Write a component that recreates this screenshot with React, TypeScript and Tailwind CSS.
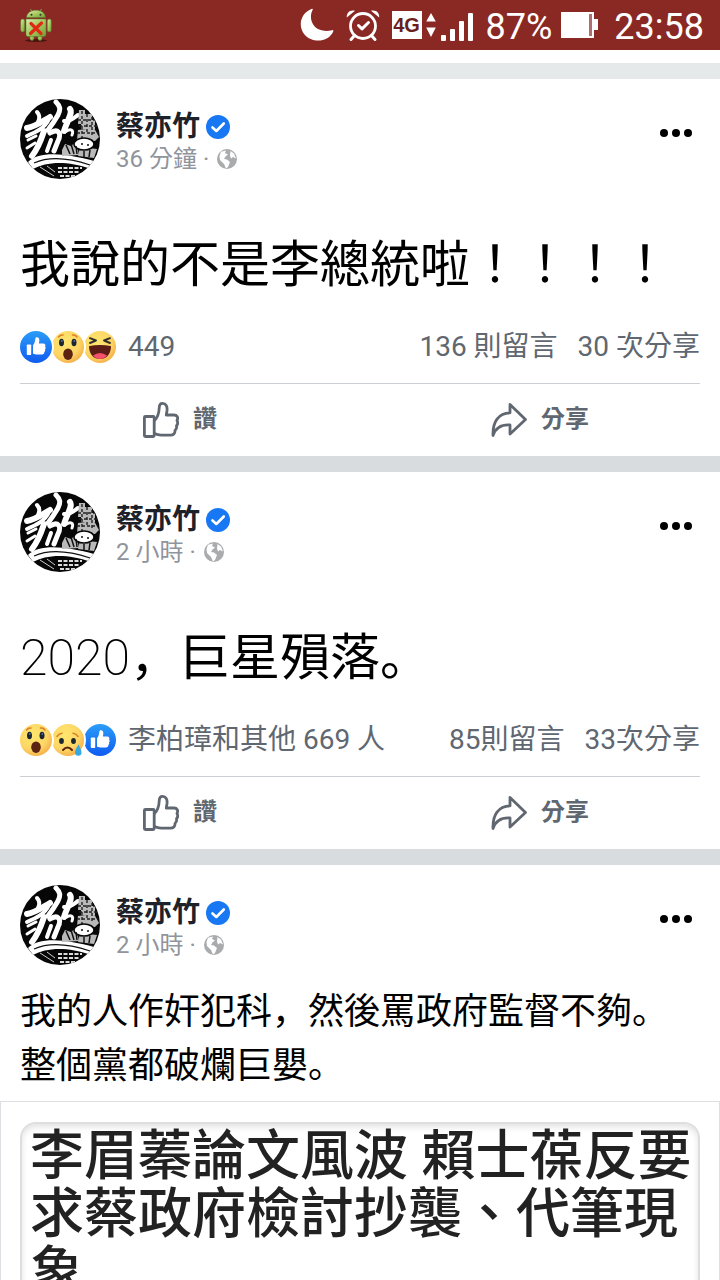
import React from 'react';

type ReactionKind = 'like' | 'wow' | 'haha' | 'sad';

interface Post {
  id: number;
  time: string;
  text: string;
  large?: boolean;
  reactions?: ReactionKind[];
  summary?: string;
  comments?: string;
  shares?: string;
  headline?: string;
}

const posts: Post[] = [
  {
    id: 1,
    time: '36 分鐘',
    text: '我說的不是李總統啦！！！！',
    large: true,
    reactions: ['like', 'wow', 'haha'],
    summary: '449',
    comments: '136 則留言',
    shares: '30 次分享',
  },
  {
    id: 2,
    time: '2 小時',
    text: '2020，巨星殞落。',
    large: true,
    reactions: ['wow', 'sad', 'like'],
    summary: '李柏璋和其他 669 人',
    comments: '85則留言',
    shares: '33次分享',
  },
  {
    id: 3,
    time: '2 小時',
    text: '我的人作奸犯科，然後罵政府監督不夠。整個黨都破爛巨嬰。',
    headline: '李眉蓁論文風波 賴士葆反要求蔡政府檢討抄襲、代筆現象',
  },
];

const AndroidIcon = () => (
  <svg viewBox="0 0 32 34" className="w-8 h-[34px]">
    <defs>
      <linearGradient id="droid" x1="0" x2="1" y1="0" y2="1">
        <stop offset="0" stopColor="#dcebb0" />
        <stop offset="0.5" stopColor="#a3ca5e" />
        <stop offset="1" stopColor="#6f9f36" />
      </linearGradient>
    </defs>
    <ellipse cx="16" cy="32.5" rx="11" ry="1.5" fill="#4a1210" />
    <path d="M10.5 1 12 3.5M21.5 1 20 3.5" stroke="#8da060" strokeWidth="1" />
    <g fill="url(#droid)" stroke="#587a30" strokeWidth=".5">
      <rect x="10" y="26" width="4" height="6.5" rx="2" />
      <rect x="18" y="26" width="4" height="6.5" rx="2" />
      <rect x="0.7" y="11" width="4" height="13" rx="2" />
      <rect x="27.3" y="11" width="4" height="13" rx="2" />
      <path d="M6.5 9.5C7 4.5 11 2.3 16 2.3s9 2.2 9.5 7.2z" />
      <path d="M6 11h20v15.5a2 2 0 0 1-2 2H8a2 2 0 0 1-2-2z" />
    </g>
    <circle cx="11.5" cy="6.8" r="1" fill="#333" />
    <circle cx="20.5" cy="6.8" r="1" fill="#333" />
    <path d="M11 15.5 21 25.5M21.5 15 10.5 25.5" stroke="#e02b14" strokeWidth="3.2" strokeLinecap="round" />
  </svg>
);

const StatusBar = () => (
  <header className="flex items-center h-[50px] shrink-0 px-5 bg-[#8a2824] text-white">
    <AndroidIcon />
    <div className="flex items-center ml-auto -mr-1">
      <svg viewBox="0 0 34 34" className="w-[34px] h-[34px] mr-3">
        <path d="M12 .8C.5 5-2.5 18 4.500 26.500c8 9.500 24.500 7.500 28.800-3.300.3-.9-.3-1.400-1.200-1C25 24 17.500 22.500 13.500 17 10.500 12.500 10 7 12.700 1.800c.3-.7-.1-1.200-.7-1z" fill="#fff" />
      </svg>
      <svg viewBox="0 0 34 34" className="w-[34px] h-[34px] mr-3" fill="none" stroke="#fff" strokeLinecap="round" strokeLinejoin="round">
        <circle cx="17" cy="18" r="12.5" strokeWidth="2.8" />
        <path d="M8.5 27.5 5 31.5M25.5 27.5 29 31.5" strokeWidth="3" />
        <path d="M12.500 17.500 16 20.800 22.500 14.500" strokeWidth="3" />
        <path d="M.8 9.5C.5 4.500 4 1.500 9 2.800zM33.200 9.500C33.500 4.500 30 1.500 25 2.800z" fill="#fff" stroke="none" />
      </svg>
      <span className="flex items-center justify-center w-[30px] h-7 bg-white text-[#6b1f1c] font-bold text-[20px] leading-7 font-['Liberation_Sans']">4G</span>
      <svg viewBox="0 0 10 26" className="w-[10px] h-[26px] mx-1" fill="#fff">
        <path d="M5 1 9.8 9.5H.2zM5 25 .2 15.5h9.6z" />
      </svg>
      <svg viewBox="0 0 34 30" className="w-[34px] h-[30px] mt-1 mr-3" fill="#fff">
        <rect x="1" y="23" width="5" height="6" rx="1" />
        <rect x="10" y="17" width="5" height="12" rx="1" />
        <rect x="19" y="9" width="5" height="20" rx="1" />
        <rect x="28" y="1" width="5" height="28" rx="1" />
      </svg>
      <span className="pt-1 text-[36px] leading-[46px] mr-2">87%</span>
      <svg viewBox="0 0 40 28" className="w-10 h-7 mr-3.5">
        <path d="M1 1h33v7h4v11h-4v8H1z" fill="#fff" />
        <path d="M29 3h3v22h-3z" fill="#b06f6c" />
      </svg>
      <span className="pt-1 text-[36px] leading-[46px]">23:58</span>
    </div>
  </header>
);

const Avatar = () => (
  <svg viewBox="0 0 80 80" className="w-20 h-20 rounded-full shrink-0">
    <rect width="80" height="80" fill="#070707" />
    {/* brush strokes */}
    <g stroke="#fff" fill="none" strokeLinecap="round" strokeLinejoin="round">
      <path d="M17 13C20 16 20 19 18 23" strokeWidth="4" />
      <path d="M7 29C15 28 23 22 30 18" strokeWidth="6" />
      <path d="M29 20C25 29 16 33 7 37" strokeWidth="4" />
      <path d="M36 3C40 7 41 10 38 16 34 23 31 27 28 31" strokeWidth="5" />
      <path d="M24 32C21 41 19 48 12 57" strokeWidth="6" />
      <path d="M8 41 16 37M7 49 15 44" strokeWidth="3" />
      <path d="M30 34C38 29 42 34 38 42L34 52" strokeWidth="5" />
      <path d="M31 41 27 52" strokeWidth="4" />
      <path d="M50 10C53 14 47 22 44 32" strokeWidth="6" />
      <path d="M44 22C50 23 55 18 58 16" strokeWidth="4" />
      <path d="M45 33C51 29 54 31 52 36" strokeWidth="3" />
    </g>
    <path d="M8 63C20 51 48 55 74 62l-3 8C46 61 26 63 13 70z" fill="#fff" />
    <path d="M14 64C32 56 52 60 70 66" stroke="#111" strokeWidth="1.2" fill="none" />
    {/* helmeted figure */}
    <g fill="#b9b9b9">
      <path d="M59 11h6v4h7v6h3v9H61v-5h-3z" />
      <path d="M58 31l16-2 5 9-4 4-18-1z" />
      <path d="M42 51l3-6 6 2 5-4 3 13-17 1z" />
      <path d="M60 48l17 2-3 9-16-2z" />
    </g>
    <path d="M62 12v28M67 15v20M72 18v19M58 21h18M59 27h18M57 34h21" stroke="#222" strokeWidth="1.4" strokeDasharray="3 2" />
    <ellipse cx="64" cy="45" rx="10" ry="6" fill="#fff" stroke="#080808" strokeWidth="1.5" />
    <path d="M46 46l4 9M51 45l3 10M56 47l1 8M61 45h2M67 46h2M64 52v6M70 51l-1 7" stroke="#111" strokeWidth="1.5" />
    <path d="M38 69h24M38 73h22M40 77h16" stroke="#ddd" strokeWidth="2.2" strokeDasharray="4 1.5" />
    <path d="M20 68l14 9M27 67l8 6" stroke="#ccc" strokeWidth="1" />
  </svg>
);

const VerifiedBadge = () => (
  <svg viewBox="0 0 24 24" className="w-6 h-6">
    <circle cx="12" cy="12" r="12" fill="#1877f2" />
    <path d="M6.5 12.5 10.3 16 17.8 8.5" fill="none" stroke="#fff" strokeWidth="2.6" strokeLinecap="round" strokeLinejoin="round" />
  </svg>
);

const GlobeIcon = () => (
  <svg viewBox="0 0 20 20" className="w-5 h-5">
    <circle cx="10" cy="10" r="10" fill="#a9abad" />
    <path d="M4 2.8 9 1.500 8 4l3 1.500-2.500 2L7 10l3 .5 3 2.500-2 5-2 1.500L7 15l-4-4-.5-4z" fill="#fff" />
    <path d="M13.500 2 17 4.500l2 5-3-1.500-2 1.500-1-3z" fill="#fff" />
  </svg>
);

const thumb =
  'M13 14.2c1.7-2 2.2-4.200 2.300-6.200 0-1.200.5-1.800 1.500-1.800 2 0 2.700 1.500 2.500 3.500l-.4 2.800h4.200c2 0 2.800 1.500 2 3 .8 1 .7 2-.1 2.800.5 1.100.2 2.100-.7 2.700.2 1.500-.7 2.500-2.300 2.500h-4.500c-1.800 0-3.200-.4-4.500-1z';

const Reaction = ({ kind }: { kind: ReactionKind }) => (
  <svg viewBox="0 0 32 32" className="w-8 h-8">
    <defs>
      <linearGradient id="blue" x1="0" x2="0" y1="0" y2="1">
        <stop offset="0" stopColor="#2a9df8" />
        <stop offset="1" stopColor="#0f5bf0" />
      </linearGradient>
      <radialGradient id="yellow" cx=".4" cy=".35" r=".75">
        <stop offset="0" stopColor="#ffe66e" />
        <stop offset="0.6" stopColor="#fdd665" />
        <stop offset="1" stopColor="#f2a443" />
      </radialGradient>
    </defs>
    <circle cx="16" cy="16" r="16" fill={kind === 'like' ? 'url(#blue)' : 'url(#yellow)'} />
    {kind === 'like' && (
      <g fill="#fff">
        <path d={thumb} />
        <rect x="6.8" y="13.5" width="4.4" height="10.5" rx=".8" />
      </g>
    )}
    {kind === 'wow' && (
      <>
        <path d="M6.500 6q2-2.500 4.500-2M20.500 4q3-.5 4.500 2" stroke="#d98029" strokeWidth="1.5" fill="none" strokeLinecap="round" />
        <ellipse cx="9.5" cy="11.5" rx="2.5" ry="3.8" fill="#1c2633" />
        <ellipse cx="22" cy="11.5" rx="2.5" ry="3.8" fill="#1c2633" />
        <circle cx="9.8" cy="10" r=".9" fill="#52749a" />
        <circle cx="22.3" cy="10" r=".9" fill="#52749a" />
        <ellipse cx="16" cy="23.2" rx="4.8" ry="5.8" fill="#5c2410" />
      </>
    )}
    {kind === 'haha' && (
      <>
        <path d="m6 7.200 6 2.300-6 2.500M26 7.200l-6 2.300 6 2.500" stroke="#332f2b" strokeWidth="1.9" fill="none" strokeLinecap="round" strokeLinejoin="round" />
        <path d="M5.500 15q10.500-2 21 0 .5 0 .5 1c-.5 7.500-4.500 12-11 12S5.500 23.500 5 16q0-1 .5-1z" fill="#5b1d16" />
        <path d="M9 24.500q7-5 14 0-3 3.500-7 3.500t-7-3.500z" fill="#f4506c" />
      </>
    )}
    {kind === 'sad' && (
      <>
        <path d="M5 12.500q2-3 5-3.200M21 9.300q3 .2 5 3.200" stroke="#d98029" strokeWidth="1.5" fill="none" strokeLinecap="round" />
        <ellipse cx="9.5" cy="17" rx="2.4" ry="3" fill="#1c2633" />
        <ellipse cx="21.5" cy="17" rx="2.4" ry="3" fill="#1c2633" />
        <path d="M11 26q4.500-5 9 0" stroke="#5c2410" strokeWidth="2" fill="none" strokeLinecap="round" />
        <path d="M26.500 20.500q-3.500 5.500-3.500 8a3.200 3.200 0 0 0 6.500 0q0-2.500-3-8z" fill="#35a9e0" />
      </>
    )}
  </svg>
);

const LikeIcon = () => (
  <svg viewBox="0 0 36 36" className="w-9 h-9" fill="none" stroke="#606770" strokeWidth="2.8" strokeLinejoin="round" strokeLinecap="round">
    <rect x="1.4" y="14.5" width="9.8" height="20" rx="1" />
    <path d="M11.500 18.500C14.500 15.500 16 11.500 16.200 6c.1-3 1.300-4.600 3.300-4.600 3.500 0 5 3.100 4.500 7.100L23.300 13H31c3.200 0 4.500 2.800 3 5.500 1 1.700.9 3.700-.5 5.200.5 2-.1 3.500-1.500 4.800.2 2.900-1.600 4.600-4.500 4.600H18c-2.500 0-4.300-.4-6.500-1.500" />
  </svg>
);

const ShareIcon = () => (
  <svg viewBox="0 0 36 36" className="w-9 h-9" fill="none" stroke="#606770" strokeWidth="2.8" strokeLinejoin="round">
    <path d="M19 2.500 34.500 17.500 19 32V23C10.500 22.500 4.500 26 2 33.500 1.500 20 7.500 11 19 10.800z" />
  </svg>
);

const PostHeader = ({ time }: { time: string }) => (
  <div className="flex px-5 pt-5">
    <Avatar />
    <div className="ml-4 pt-2">
      <div className="flex items-center h-10 gap-1.5">
        <a href="#" className="text-[28px] leading-10 font-bold text-[#1d2129]">蔡亦竹</a>
        <VerifiedBadge />
      </div>
      <div className="flex items-center h-6 gap-2 text-[24px] leading-6 text-[#90949c]">
        <span>{time} ·</span>
        <GlobeIcon />
      </div>
    </div>
    <button aria-label="更多" className="flex gap-1 ml-auto mr-2 mt-[30px] h-2">
      <span className="w-2 h-2 rounded-full bg-black" />
      <span className="w-2 h-2 rounded-full bg-black" />
      <span className="w-2 h-2 rounded-full bg-black" />
    </button>
  </div>
);

// Numbers in large posts use the thin face, the rest stays regular
const LargeText = ({ text }: { text: string }) => (
  <p lang="ja" className="px-5 pt-[50px] pb-[30px] text-[50px] leading-[72px] text-black">
    {text.split(/(\d+)/).map((part, i) =>
      /^\d+$/.test(part) ? <span key={i} className="font-extralight">{part}</span> : part
    )}
  </p>
);

const PostFooter = ({ post }: { post: Post }) => (
  <>
    <div className="flex items-center mx-5 pb-5 border-b border-[#ccd0d5] text-[28px] leading-8 text-[#606770]">
      <div className="flex mr-3">
        {post.reactions?.map((kind, i) => (
          <span key={kind} className={`relative rounded-full ring-2 ring-white ${['z-30', 'z-20', 'z-10'][i]}`}>
            <Reaction kind={kind} />
          </span>
        ))}
      </div>
      <span>{post.summary}</span>
      <a href="#" className="ml-auto">{post.comments}</a>
      <a href="#" className="ml-5">{post.shares}</a>
    </div>
    <div className="grid grid-cols-2 h-[72px] text-[24px] leading-8 font-bold text-[#606770]">
      <button className="flex items-center justify-center gap-3.5">
        <LikeIcon />
        <span className="pb-0.5">讚</span>
      </button>
      <button className="flex items-center justify-center gap-3.5">
        <ShareIcon />
        <span className="pb-0.5">分享</span>
      </button>
    </div>
  </>
);

const PostCard = ({ post }: { post: Post }) => (
  <article className="bg-white">
    <PostHeader time={post.time} />
    {post.large ? (
      <LargeText text={post.text} />
    ) : (
      <p lang="ja" className="px-5 pt-5 pb-2 text-[36px] leading-[54px] text-black">{post.text}</p>
    )}
    {post.reactions && <PostFooter post={post} />}
    {post.headline && (
      <a href="#" className="block border border-[#dddfe2] px-[19px] pt-5">
        <div className="rounded-t-2xl border-2 border-b-0 border-[#dedede] pt-1 pl-2 shadow-[inset_0_3px_6px_#e2e2e2]">
          <h2 className="text-[54px] leading-[58px] font-medium text-[#222]">{post.headline}</h2>
        </div>
      </a>
    )}
  </article>
);

const App: React.FC = () => {
  return (
    <div lang="zh-Hant" className="flex flex-col h-screen overflow-hidden bg-white font-[Roboto,'Noto_Sans_CJK_JP',sans-serif]">
      <StatusBar />
      <main className="mt-[13px]">
        <div className="h-4 bg-[#e5e9ea]" />
        <div className="flex flex-col gap-4 bg-[#d9dcdf]">
          {posts.map((post) => (
            <PostCard key={post.id} post={post} />
          ))}
        </div>
      </main>
    </div>
  );
};

export default App;
